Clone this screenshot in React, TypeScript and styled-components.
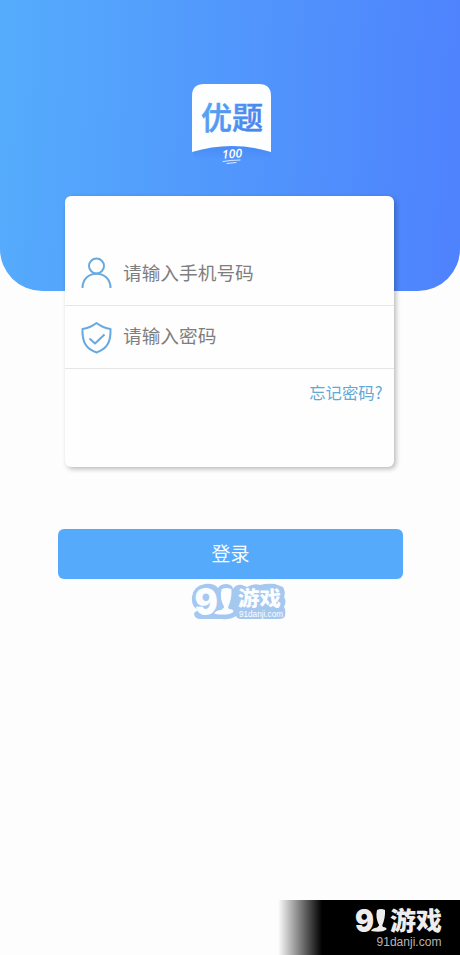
import React from "react";
import styled, { createGlobalStyle } from "styled-components";

const sans = `"Noto Sans CJK SC", "Noto Sans", sans-serif`;

const GlobalStyle = createGlobalStyle`
  * { box-sizing: border-box; }
  body { margin: 0; background: #fdfdfd; font-family: ${sans}; }
`;

const Page = styled.main`
  position: relative;
  display: flex;
  flex-direction: column;
  height: 955px;
  overflow: hidden;
  background: #fdfdfd;
`;

const Hero = styled.header`
  display: flex;
  justify-content: center;
  flex: none;
  height: 291px;
  padding: 84px 0 0 3px;
  border-radius: 0 0 42px 42px;
  background: linear-gradient(93deg, #55abfc 3%, #4e83fd 97%);
`;

const LogoSvg = styled.svg`
  display: block;
  width: 80px;
  height: 82px;
`;

const Card = styled.form`
  display: flex;
  flex-direction: column;
  flex: none;
  width: 329.5px;
  height: 271px;
  margin: -95px 0 0 64.5px;
  padding-top: 46px;
  border-radius: 6px;
  background: #fefefe;
  box-shadow: 2px 2px 5px rgba(0, 0, 0, 0.27);
`;

const Field = styled.label`
  display: flex;
  align-items: center;
  height: 63.5px;
  padding-left: 16.5px;
  gap: 11px;
  border-bottom: 1px solid #e5e5e5;
`;

const FieldIcon = styled.svg`
  flex: none;
  width: 31px;
  height: 34px;
  fill: none;
  stroke: #68a9df;
  stroke-width: 2;
  stroke-linejoin: round;
`;

const Input = styled.input`
  flex: 1;
  min-width: 0;
  height: 30px;
  margin-bottom: 3px;
  padding: 0;
  border: 0;
  outline: 0;
  background: transparent;
  font: 400 18.7px/30px ${sans};
  &::placeholder { color: #7e7e7e; opacity: 1; }
`;

const Forgot = styled.a`
  align-self: flex-end;
  margin: 11px 11.5px 0 0;
  color: #62a8d6;
  font-size: 16.4px;
  line-height: 24px;
`;

const Submit = styled.button`
  flex: none;
  width: 345px;
  height: 50px;
  margin: 62px 0 0 58px;
  padding: 0 0 2px;
  border: 0;
  border-radius: 6px;
  background: #56aafb;
  color: #f4fcff;
  font: 400 19px/48px ${sans};
`;

const Watermark = styled.svg`
  position: absolute;
  left: 188px;
  top: 580px;
  width: 102px;
  height: 44px;
`;

const CornerBanner = styled.div`
  position: absolute;
  right: 0;
  bottom: 0;
  display: flex;
  justify-content: flex-end;
  width: 182px;
  height: 55px;
  padding-right: 16px;
  background: linear-gradient(90deg, rgba(0, 0, 0, 0) 0, #000 44px);
`;

const BannerSvg = styled.svg`
  display: block;
  width: 94px;
  height: 55px;
`;

function Logo() {
  return (
    <LogoSvg viewBox="0 0 80 82">
      <defs>
        <linearGradient id="title" x1="0" y1="0" x2="1" y2="0.3">
          <stop offset="0" stopColor="#58a8f3" />
          <stop offset="1" stopColor="#4b85ee" />
        </linearGradient>
        <linearGradient id="fold" x1="0" y1="0" x2="0" y2="1">
          <stop offset="0" stopColor="#3a7cea" stopOpacity="0.5" />
          <stop offset="1" stopColor="#3c7cf0" stopOpacity="0" />
        </linearGradient>
      </defs>
      <path d="M1 60H79V69Q79 76 73 76H8Q1 76 1 69Z" fill="url(#fold)" />
      <path d="M0 68V12Q0 0 12 0H67Q79 0 79 12V68Q39.500 56 0 68Z" fill="#fcfeff" />
      <text x="9" y="45" fontFamily="Noto Sans CJK SC, sans-serif" fontWeight="500" fontSize="31" fill="url(#title)" stroke="url(#title)" strokeWidth="0.5">优题</text>
      <text x="30" y="74" transform="rotate(-4 40 70)" fontFamily="Open Sans, sans-serif" fontStyle="italic" fontWeight="600" fontSize="12" fill="#fff" textLength="20">100</text>
      <path d="M31 77.500Q40 76 48 76M35 79.500L44 78.500" fill="none" stroke="#fff" strokeWidth="0.8" strokeLinecap="round" />
    </LogoSvg>
  );
}

function BrandMark() {
  return (
    <>
      <text x="-2" y="23" fontFamily="Inter, sans-serif" fontWeight="900" fontSize="31" textLength="19" lengthAdjust="spacingAndGlyphs">9</text>
      <path d="M20 1Q24-1 28 1Q28.500 9 25 17H22.500Q18 9 20 1Z" />
      <path d="M14 22Q15 19 20 18.500L22.500 16H25L26 18Q30 18 29.500 20.500Q25 24 14 22Z" />
    </>
  );
}

export default function App() {
  return (
    <>
      <GlobalStyle />
      <Page>
        <Hero><Logo /></Hero>
        <Card>
          <Field>
            <FieldIcon viewBox="0 0 31 34">
              <circle cx="15.500" cy="10" r="7.500" />
              <path d="M1.500 32C1.500 13 29.500 13 29.500 32" />
            </FieldIcon>
            <Input type="tel" placeholder="请输入手机号码" />
          </Field>
          <Field>
            <FieldIcon viewBox="0 0 31 34">
              <path d="M15.500 3Q9 8 1.500 9C1 22 5 29 15.500 32.500C26 29 30 22 29.500 9Q22 8 15.500 3Z" />
              <path d="M8.500 18.500L14 23.500L23.500 14.500" />
            </FieldIcon>
            <Input type="password" placeholder="请输入密码" />
          </Field>
          <Forgot>忘记密码?</Forgot>
        </Card>
        <Submit type="button">登录</Submit>
        <Watermark viewBox="0 0 102 44">
          <path d="M17 4Q26 3 30 8Q32 4 39 4Q45 5 45 9Q48 4 54 5L59 7Q66 3 72 5Q79 3 87 4L95 7Q98 12 96 17Q99 21 96 27Q98 29 97 36Q96 39 91 39H53Q49 39 48 36Q42 40 34 39H11Q6 38 6 33L10 30Q3 26 4 17Q5 6 17 4Z" fill="#a5c8f1" />
          <g fill="#fcfdff">
            <g transform="translate(9 8) scale(1.23 1.17)"><BrandMark /></g>
            <text x="50" y="25.500" fontFamily="Noto Sans CJK SC, sans-serif" fontWeight="900" fontSize="20.500" textLength="43" lengthAdjust="spacingAndGlyphs">游戏</text>
            <text x="51" y="36.500" fontFamily="Liberation Sans, sans-serif" fontSize="9" textLength="44" lengthAdjust="spacingAndGlyphs">91danji.com</text>
          </g>
        </Watermark>
        <CornerBanner>
          <BannerSvg viewBox="0 0 94 55">
            <g transform="translate(7 9)" fill="#ededed">
              <BrandMark />
              <text x="33" y="20.500" fontFamily="Noto Sans CJK SC, sans-serif" fontWeight="900" fontSize="25" textLength="52" lengthAdjust="spacingAndGlyphs">游戏</text>
            </g>
            <text x="26.500" y="46" fontFamily="Liberation Sans, sans-serif" fontSize="12" fill="#b5b5b5" textLength="65" lengthAdjust="spacingAndGlyphs">91danji.com</text>
          </BannerSvg>
        </CornerBanner>
      </Page>
    </>
  );
}
